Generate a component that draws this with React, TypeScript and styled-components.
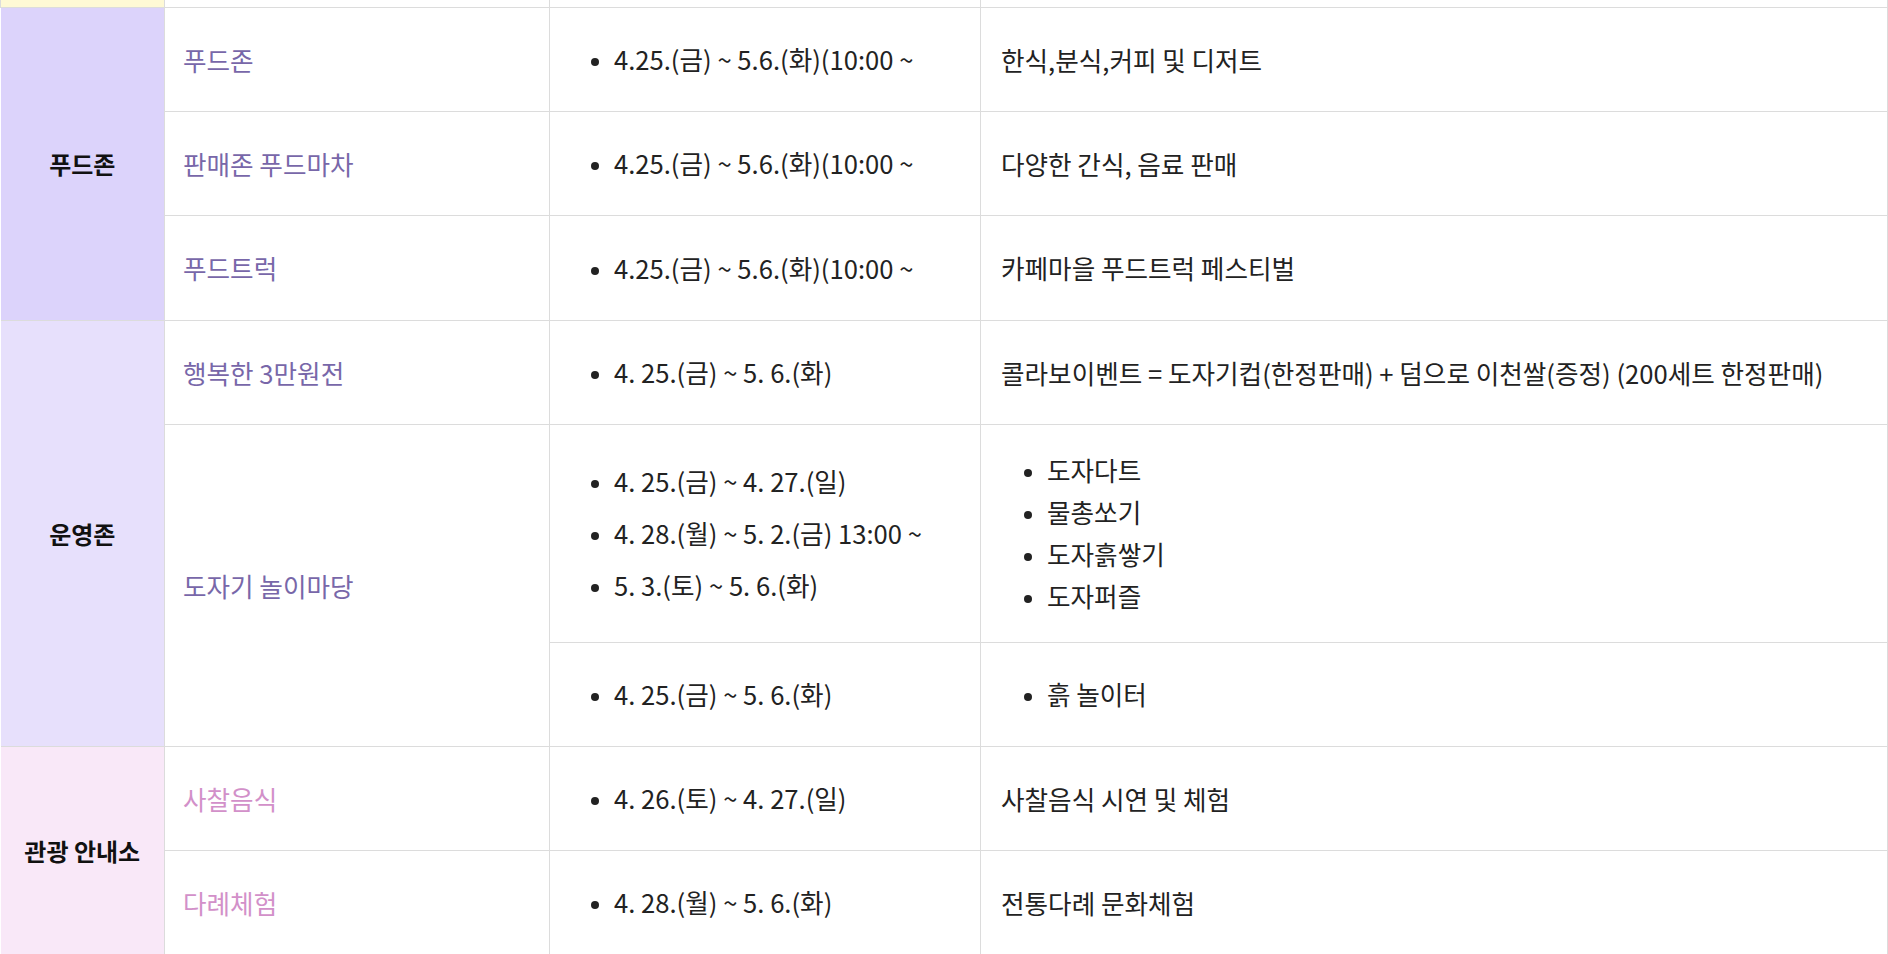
import React from "react";
import styled, { createGlobalStyle } from "styled-components";

const GlobalStyle = createGlobalStyle`
  html, body { margin: 0; padding: 0; background: #fff; }
  body { font-family: "Noto Sans CJK KR", "Noto Sans", sans-serif; color: #222; }
`;

const Table = styled.table`
  width: 1888px;
  border-collapse: collapse;
  table-layout: fixed;
`;

const Row = styled.tr<{ $h?: number }>`
  height: ${(p) => p.$h ?? 104}px;
`;

const ZoneCell = styled.th<{ $bg: string }>`
  background: ${(p) => p.$bg};
  border: 1px solid #dcdcdc;
  border-left: none;
  font-size: 24px;
  font-weight: 700;
  color: #111;
  text-align: center;
  vertical-align: middle;
  padding: 0;
`;

const NameCell = styled.td<{ $color: string }>`
  border: 1px solid #dcdcdc;
  padding: 0 18px;
  font-size: 25.6px;
  color: ${(p) => p.$color};
  vertical-align: middle;
`;

const Cell = styled.td`
  border: 1px solid #dcdcdc;
  padding: 0 20px;
  font-size: 25.6px;
  color: #222;
  vertical-align: middle;
  white-space: nowrap;
`;

const StripCell = styled.td<{ $bg?: string }>`
  background: ${(p) => p.$bg ?? "#fff"};
  border: 1px solid #dcdcdc;
  border-top: none;
  padding: 0;
`;

const DateList = styled.ul`
  margin: 0;
  padding-left: 44px;
  list-style: disc;
  li {
    line-height: 38px;
    margin: 14px 0;
  }
  li::marker {
    font-size: 0.8em;
  }
`;

const ItemList = styled.ul`
  margin: 0;
  padding-left: 46px;
  list-style: disc;
  li {
    line-height: 42px;
  }
  li::marker {
    font-size: 0.8em;
  }
`;

const PURPLE = "#7867a9";
const PINK = "#d290c9";

export default function App() {
  return (
    <>
      <GlobalStyle />
      <Table>
        <colgroup>
          <col style={{ width: 164 }} />
          <col style={{ width: 385 }} />
          <col style={{ width: 431 }} />
          <col />
        </colgroup>
        <tbody>
          <Row $h={7}>
            <StripCell $bg="#fef9d5" />
            <StripCell />
            <StripCell />
            <StripCell />
          </Row>
          <Row>
            <ZoneCell $bg="#dcd3fb" rowSpan={3}>푸드존</ZoneCell>
            <NameCell $color={PURPLE}>푸드존</NameCell>
            <Cell>
              <DateList><li>4.25.(금) ~ 5.6.(화)(10:00 ~</li></DateList>
            </Cell>
            <Cell>한식,분식,커피 및 디저트</Cell>
          </Row>
          <Row>
            <NameCell $color={PURPLE}>판매존 푸드마차</NameCell>
            <Cell>
              <DateList><li>4.25.(금) ~ 5.6.(화)(10:00 ~</li></DateList>
            </Cell>
            <Cell>다양한 간식, 음료 판매</Cell>
          </Row>
          <Row $h={105}>
            <NameCell $color={PURPLE}>푸드트럭</NameCell>
            <Cell>
              <DateList><li>4.25.(금) ~ 5.6.(화)(10:00 ~</li></DateList>
            </Cell>
            <Cell>카페마을 푸드트럭 페스티벌</Cell>
          </Row>
          <Row>
            <ZoneCell $bg="#e7e0fc" rowSpan={3}>운영존</ZoneCell>
            <NameCell $color={PURPLE}>행복한 3만원전</NameCell>
            <Cell>
              <DateList><li>4. 25.(금) ~ 5. 6.(화)</li></DateList>
            </Cell>
            <Cell>콜라보이벤트 = 도자기컵(한정판매) + 덤으로 이천쌀(증정) (200세트 한정판매)</Cell>
          </Row>
          <Row $h={218}>
            <NameCell $color={PURPLE} rowSpan={2}>도자기 놀이마당</NameCell>
            <Cell>
              <DateList>
                <li>4. 25.(금) ~ 4. 27.(일)</li>
                <li>4. 28.(월) ~ 5. 2.(금) 13:00 ~</li>
                <li>5. 3.(토) ~ 5. 6.(화)</li>
              </DateList>
            </Cell>
            <Cell>
              <ItemList>
                <li>도자다트</li>
                <li>물총쏘기</li>
                <li>도자흙쌓기</li>
                <li>도자퍼즐</li>
              </ItemList>
            </Cell>
          </Row>
          <Row>
            <Cell>
              <DateList><li>4. 25.(금) ~ 5. 6.(화)</li></DateList>
            </Cell>
            <Cell>
              <ItemList><li>흙 놀이터</li></ItemList>
            </Cell>
          </Row>
          <Row>
            <ZoneCell $bg="#f9e8f8" rowSpan={2}>관광 안내소</ZoneCell>
            <NameCell $color={PINK}>사찰음식</NameCell>
            <Cell>
              <DateList><li>4. 26.(토) ~ 4. 27.(일)</li></DateList>
            </Cell>
            <Cell>사찰음식 시연 및 체험</Cell>
          </Row>
          <Row>
            <NameCell $color={PINK}>다례체험</NameCell>
            <Cell>
              <DateList><li>4. 28.(월) ~ 5. 6.(화)</li></DateList>
            </Cell>
            <Cell>전통다례 문화체험</Cell>
          </Row>
        </tbody>
      </Table>
    </>
  );
}
